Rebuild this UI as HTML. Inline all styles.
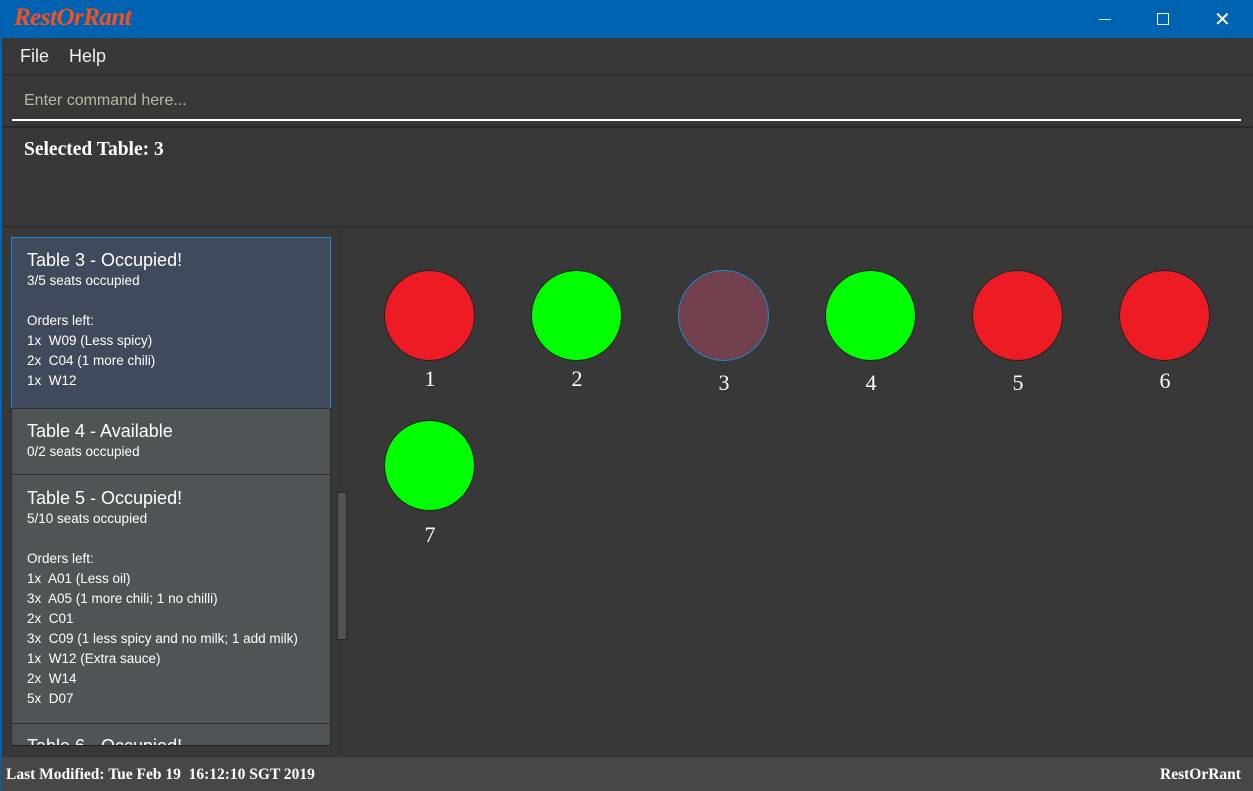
<!DOCTYPE html>
<html><head><style>
*{margin:0;padding:0;box-sizing:border-box}
body{width:1253px;height:791px;background:#383838;position:relative;overflow:hidden;font-family:"Liberation Sans",sans-serif;color:#fff}
.abs{position:absolute}
#title{left:0;top:0;width:1253px;height:38px;background:#0063b1}
#logo{left:14px;top:4px;font-family:"Liberation Serif",serif;font-style:italic;font-weight:bold;color:#f4511e;font-size:25px;letter-spacing:-0.5px}
.wc{top:10px;color:#fff;font-size:16px}
#menu{left:1px;top:38px;width:1252px;height:37px;background:#383838;border-bottom:1px solid #2a2a2a}
.mi{top:46px;font-size:18px;color:#eee}
#cmdph{left:24px;top:92px;font-size:16px;color:#b9b9a0}
#uline{left:12px;top:119px;width:1229px;height:2px;background:#fff}
#sep1{left:1px;top:126px;width:1252px;height:2px;background:#2a2a2a}
#sel{left:24px;top:139px;font-family:"Liberation Serif",serif;font-weight:bold;font-size:19.5px}
#sep2{left:1px;top:226px;width:1252px;height:1px;background:#2a2a2a}
#lb{left:0;top:0;width:2px;height:791px;background:#0063b1}
.card{left:11px;width:320px;padding:11px 15px;font-size:13.5px;line-height:20px;border:1px solid #2f2f2f;background:#4f5556}
.card h{display:block;font-size:18px;line-height:22px;margin-bottom:0}
#listbox{left:11px;top:237px;width:320px;height:509px;overflow:hidden;border-bottom:1px solid #222}
#sb{left:337px;top:492px;width:10px;height:148px;background:#4f5556;border:1px solid #2a2a2a}
#vsep{left:341px;top:228px;width:1px;height:528px;background:#2f2f2f}
.c{width:91px;height:91px;border-radius:50%;border:1px solid #222}
.r{background:#ed1c24}.g{background:#00ff00}
.n{font-family:"Liberation Serif",serif;font-size:22px;width:40px;text-align:center}
#status{left:1px;top:757px;width:1252px;height:34px;background:#474747}
.st{top:766px;font-family:"Liberation Serif",serif;font-size:15.5px;font-weight:bold}
</style></head><body>
<div id="title" class="abs"></div>
<div id="logo" class="abs">RestOrRant</div>
<div class="abs" style="left:1099px;top:19px;width:12px;height:1px;background:#fff"></div>
<div class="abs" style="left:1157px;top:13px;width:12px;height:12px;border:1px solid #fff"></div>
<div class="abs wc" style="left:1214px;top:7px;font-size:20px">✕</div>
<div id="menu" class="abs"></div>
<div class="abs mi" style="left:20px">File</div>
<div class="abs mi" style="left:69px">Help</div>
<div id="cmdph" class="abs">Enter command here...</div>
<div id="uline" class="abs"></div>
<div id="sep1" class="abs"></div>
<div id="sel" class="abs">Selected Table: 3</div>
<div id="sep2" class="abs"></div>
<div id="lb" class="abs"></div>
<div id="vsep" class="abs"></div>
<div id="listbox" class="abs">
<div class="card abs" style="left:0;top:0;height:172px;background:#404a5c;border-color:#1a8ad6"><h>Table 3 - Occupied!</h>3/5 seats occupied<br><br>Orders left:<br>1x&nbsp; W09 (Less spicy)<br>2x&nbsp; C04 (1 more chili)<br>1x&nbsp; W12</div>
<div class="card abs" style="left:0;top:171px;height:67px"><h>Table 4 - Available</h>0/2 seats occupied</div>
<div class="card abs" style="left:0;top:237px;height:250px;padding-top:12px"><h>Table 5 - Occupied!</h>5/10 seats occupied<br><br>Orders left:<br>1x&nbsp; A01 (Less oil)<br>3x&nbsp; A05 (1 more chili; 1 no chilli)<br>2x&nbsp; C01<br>3x&nbsp; C09 (1 less spicy and no milk; 1 add milk)<br>1x&nbsp; W12 (Extra sauce)<br>2x&nbsp; W14<br>5x&nbsp; D07</div>
<div class="card abs" style="left:0;top:486px;height:60px"><h>Table 6 - Occupied!</h></div>
</div>
<div id="sb" class="abs"></div>
<div class="abs c r" style="left:384px;top:270px"></div>
<div class="abs c g" style="left:531px;top:270px"></div>
<div class="abs c" style="left:678px;top:270px;background:#73404d;border-color:#1a8ad6"></div>
<div class="abs c g" style="left:825px;top:270px"></div>
<div class="abs c r" style="left:972px;top:270px"></div>
<div class="abs c r" style="left:1119px;top:270px"></div>
<div class="abs c g" style="left:384px;top:420px"></div>
<div class="abs n" style="left:410px;top:366px">1</div>
<div class="abs n" style="left:557px;top:366px">2</div>
<div class="abs n" style="left:704px;top:370px">3</div>
<div class="abs n" style="left:851px;top:370px">4</div>
<div class="abs n" style="left:998px;top:370px">5</div>
<div class="abs n" style="left:1145px;top:368px">6</div>
<div class="abs n" style="left:410px;top:522px">7</div>
<div id="status" class="abs"></div>
<div class="abs st" style="left:6px">Last Modified: Tue Feb 19&nbsp; 16:12:10 SGT 2019</div>
<div class="abs st" style="left:1160px">RestOrRant</div>
</body></html>
